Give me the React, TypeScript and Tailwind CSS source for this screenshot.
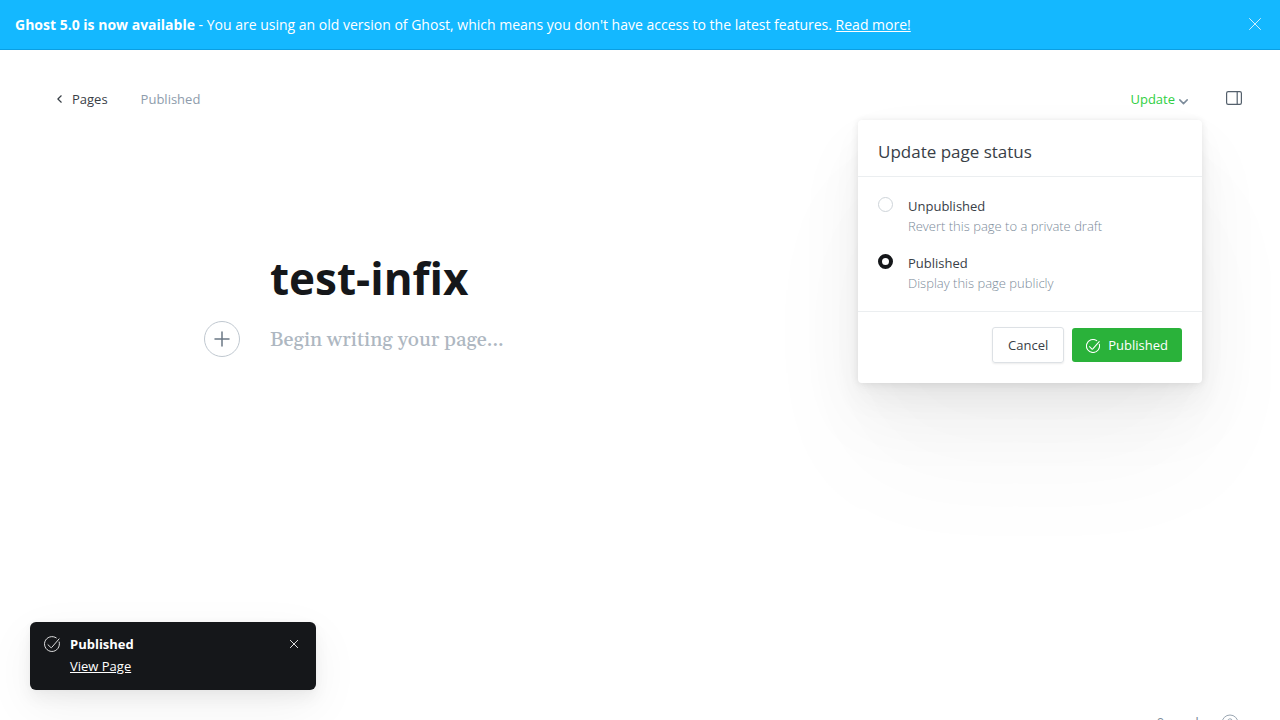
import { useState } from "react";

function CheckCircle({ className }: { className: string }) {
  return (
    <svg viewBox="0 0 24 24" fill="none" stroke="currentColor" strokeLinecap="round" strokeLinejoin="round" className={className} aria-hidden="true">
      <path d="M6 13.2 l4.2 4 a1 1 0 0 0 1.5-.2 L22.6 4.4" />
      <path d="M22.8 9 A11.2 11.2 0 1 1 18.4 2.8" />
    </svg>
  );
}

function Cross({ className }: { className: string }) {
  return (
    <svg viewBox="0 0 12 12" fill="none" stroke="currentColor" strokeLinecap="round" className={className} aria-hidden="true">
      <path d="M.5 .5 L11.5 11.5 M11.5 .5 L.5 11.5" />
    </svg>
  );
}

function Banner() {
  return (
    <aside className="flex h-[50px] shrink-0 items-center justify-between border-b border-[#0b9fe2] bg-[#14b8ff] pr-[19px] pl-[15px] text-sm text-white">
      <p>
        <strong className="font-bold">Ghost 5.0 is now available</strong> - You are using an old version of Ghost, which means you don't have access to the latest features.{" "}
        <a href="#release" className="underline">Read more!</a>
      </p>
      <button type="button" aria-label="Close" className="pb-px">
        <Cross className="size-3 stroke-[0.8]" />
      </button>
    </aside>
  );
}

const options = [
  { id: "unpublished", label: "Unpublished", hint: "Revert this page to a private draft" },
  { id: "published", label: "Published", hint: "Display this page publicly" },
];

function StatusMenu() {
  const [status, setStatus] = useState("published");
  return (
    <section className="absolute top-full -right-3.5 z-10 w-[344px] rounded bg-white text-[#394047] shadow-[0_0_7px_rgba(0,0,0,0.08),0_5px_12px_rgba(0,0,0,0.03),0_17px_30px_rgba(0,0,0,0.04),0_34px_70px_rgba(0,0,0,0.05),0_80px_130px_rgba(0,0,0,0.03)]">
      <h2 className="border-b border-[#ebeef0] px-5 pt-5 pb-3 text-[17px] leading-6">Update page status</h2>
      <div className="flex flex-col gap-4 border-b border-[#ebeef0] px-5 pt-[18px] pb-[18px]">
        {options.map((o) => (
          <div key={o.id} className="flex gap-[15px]">
            <input
              type="radio"
              name="status"
              id={o.id}
              checked={status === o.id}
              onChange={() => setStatus(o.id)}
              className="mt-0.5 size-[15px] shrink-0 appearance-none rounded-full border border-[#ced4d9] bg-white checked:border-4 checked:border-[#15171a]"
            />
            <label htmlFor={o.id} className="flex flex-col pt-px">
              <span className="leading-5">{o.label}</span>
              <span className="leading-5 font-light text-[#7c8b9a]">{o.hint}</span>
            </label>
          </div>
        ))}
      </div>
      <div className="flex items-center justify-end gap-2 px-5 pt-[15px] pb-5">
        <button type="button" className="h-9 rounded-[3px] border border-[#dde1e5] px-[15px] pt-0.5 shadow-[0_1px_2px_rgba(0,0,0,0.08)]">Cancel</button>
        <button type="button" className="flex h-[34px] items-center gap-2 rounded-[3px] bg-[#2ab23a] px-3.5 pt-px text-white">
          <CheckCircle className="size-3.5 stroke-[1.8]" />
          Published
        </button>
      </div>
    </section>
  );
}

function Header() {
  return (
    <header className="flex h-[70px] shrink-0 items-end justify-between pr-[38px] pl-[57px]">
      <nav className="flex h-[42px] gap-[33px]">
        <a href="#pages" className="flex h-[42px] items-center gap-2.5 text-[#394047]">
          <svg viewBox="0 0 5 8" fill="none" stroke="currentColor" strokeWidth="1.2" strokeLinecap="round" strokeLinejoin="round" className="h-2 w-[5px]" aria-hidden="true">
            <path d="M4.2 .8 L.9 4 L4.2 7.2" />
          </svg>
          <span className="pt-0.5">Pages</span>
        </a>
        <span className="flex h-[42px] items-center pt-0.5 text-[#8e9cac]">Published</span>
      </nav>
      <div className="flex h-[42px] items-center gap-[38px]">
        <div className="relative flex h-[42px] items-center">
          <button type="button" aria-expanded="true" className="flex items-center gap-1 pt-0.5 text-[#30cf43]">
            Update
            <svg viewBox="0 0 9 6" fill="none" stroke="#7c8b9a" strokeWidth="1.5" strokeLinecap="round" strokeLinejoin="round" className="mt-1 h-1.5 w-[9px]" aria-hidden="true">
              <path d="M.8 .9 L4.5 4.6 L8.2 .9" />
            </svg>
          </button>
          <StatusMenu />
        </div>
        <button type="button" aria-label="Settings" className="pb-0.5">
          <svg viewBox="0 0 16 14" fill="none" stroke="#54606c" className="h-3.5 w-4" aria-hidden="true">
            <rect x=".6" y=".6" width="14.8" height="12.8" rx="1.6" strokeWidth="1.2" />
            <path d="M11.2 .6 V13.4" strokeWidth="1.2" />
          </svg>
        </button>
      </div>
    </header>
  );
}

function Editor() {
  return (
    <div className="mx-auto flex w-full max-w-[740px] grow flex-col pt-[127px]">
      <input
        aria-label="Page title"
        defaultValue="test-infix"
        className="h-[62px] w-full text-[44px] font-bold text-[#15171a] outline-none"
      />
      <div className="mt-3 -ml-[66px] flex items-center gap-[30px]">
        <button type="button" aria-label="Add a card" className="flex size-9 items-center justify-center rounded-full border border-[#c0c8d0] text-[#6b7885]">
          <svg viewBox="0 0 16 16" fill="none" stroke="currentColor" strokeWidth="1.5" strokeLinecap="round" className="size-4" aria-hidden="true">
            <path d="M8 1 V15 M1 8 H15" />
          </svg>
        </button>
        <input
          aria-label="Page content"
          placeholder="Begin writing your page..."
          className="h-9 grow pt-0.5 font-['Gelasio','Georgia','Liberation_Serif',serif] text-xl font-medium outline-none placeholder:text-[#aeb7c1]"
        />
      </div>
    </div>
  );
}

function Toast() {
  return (
    <div role="status" className="absolute bottom-[30px] left-[30px] flex h-[68px] w-[286px] items-start rounded-md bg-[#15171a] px-3.5 pt-[11px] text-white shadow-[0_0_7px_rgba(0,0,0,0.03),0_8px_16px_rgba(0,0,0,0.05),0_16px_50px_rgba(0,0,0,0.06)]">
      <CheckCircle className="mt-[3px] size-4 stroke-[1.3]" />
      <div className="ml-2.5 flex grow flex-col">
        <span className="leading-[22px] font-bold">Published</span>
        <a href="#view" className="self-start leading-[22px] underline">View Page</a>
      </div>
      <button type="button" aria-label="Dismiss" className="mt-[7px] mr-1">
        <Cross className="size-2 stroke-[1.3]" />
      </button>
    </div>
  );
}

export default function App() {
  return (
    <div className="relative flex h-screen flex-col overflow-hidden bg-white font-['Open_Sans',sans-serif] text-[13px]">
      <Banner />
      <main className="flex h-screen shrink-0 flex-col">
        <Header />
        <Editor />
        <footer className="flex items-center justify-end gap-4 pr-[41px] pb-[37px] leading-[18px] text-[#7c8b9a]">
          <span className="pb-0.5">0 words</span>
          <a href="#help" aria-label="Help">
            <svg viewBox="0 0 18 18" fill="none" stroke="#9aa6b2" className="size-[18px]" aria-hidden="true">
              <circle cx="9" cy="9" r="8" />
              <path d="M6.8 7 A2.2 2.2 0 1 1 9.6 9.1 Q9 9.4 9 10.6 M9 12.8 V13.2" strokeLinecap="round" />
            </svg>
          </a>
        </footer>
      </main>
      <Toast />
    </div>
  );
}
